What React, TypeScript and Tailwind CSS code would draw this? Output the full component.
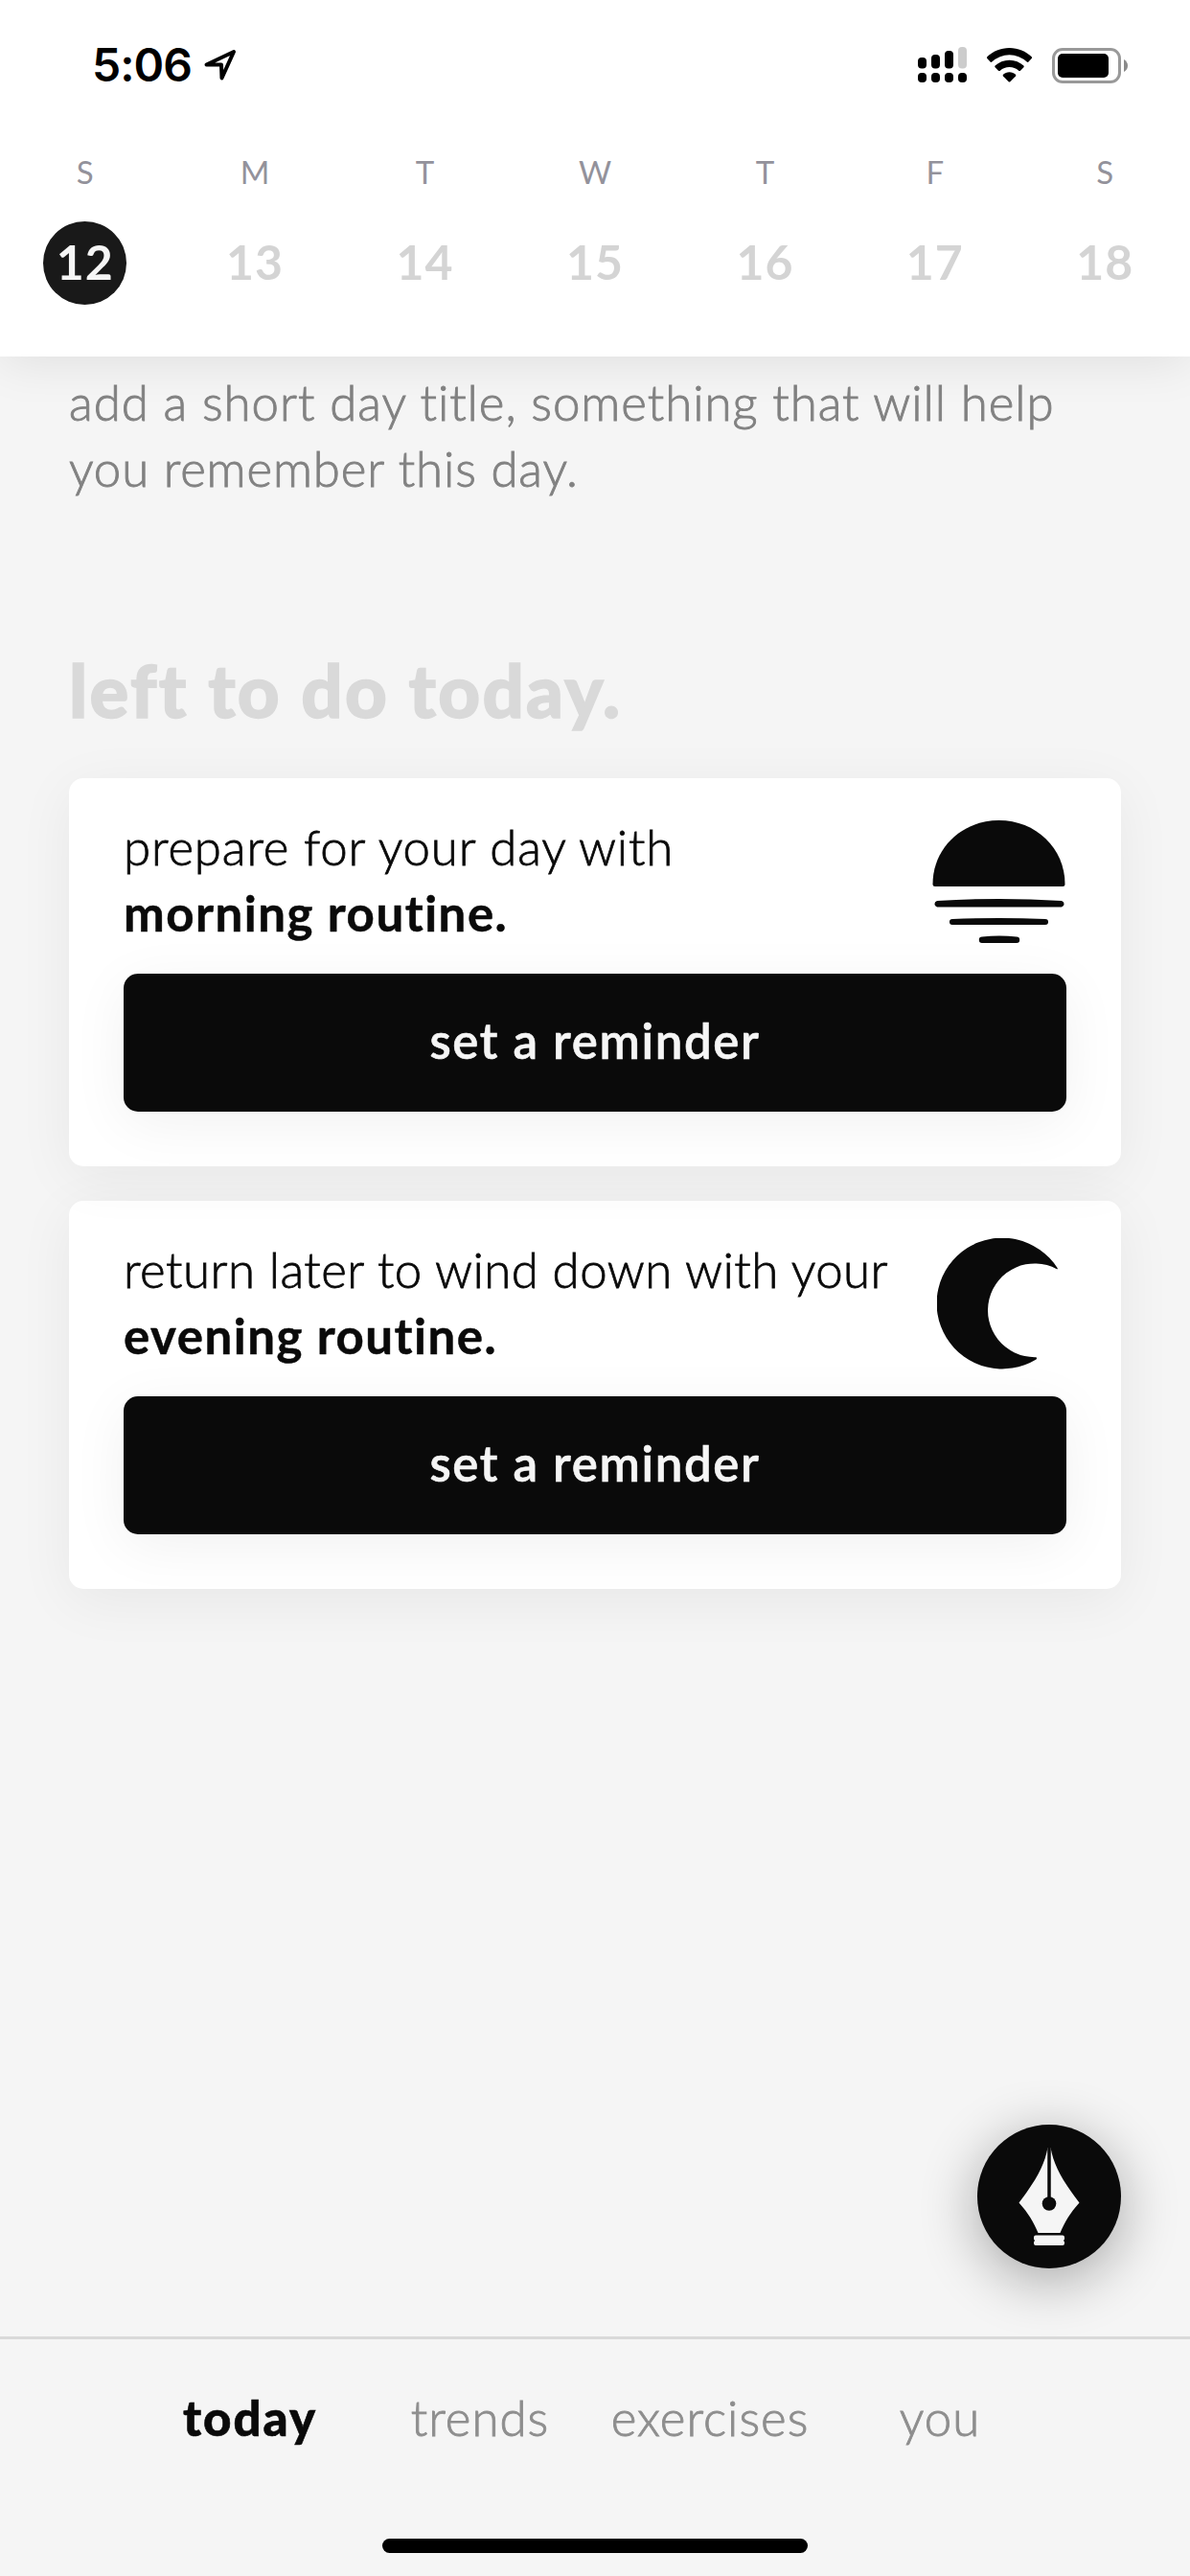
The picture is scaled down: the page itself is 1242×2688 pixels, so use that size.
import type { ReactNode } from "react";

const days = [
  { letter: "S", date: 12 },
  { letter: "M", date: 13 },
  { letter: "T", date: 14 },
  { letter: "W", date: 15 },
  { letter: "T", date: 16 },
  { letter: "F", date: 17 },
  { letter: "S", date: 18 },
];

function StatusBar() {
  return (
    <div className="flex h-[121px] items-center justify-between pt-[14px] pr-[65px] pl-[96px]">
      <div className="flex items-center">
        <span className="font-[Inter] text-[48px] leading-[60px] font-semibold tracking-[-1px] text-black">5:06</span>
        <svg className="ml-[13px] h-[34px] w-[34px]" viewBox="0 0 34 34" fill="none" stroke="#000" strokeWidth="4" strokeLinejoin="round">
          <path d="M2.5 16.500 31 3 18.500 30.500 18 16.500Z" />
        </svg>
      </div>
      <div className="flex items-start">
        <svg className="h-[38px] w-[52px]" viewBox="0 0 52 38">
          <rect x="0" y="11" width="9" height="11.5" rx="4" />
          <rect x="14" y="8" width="9" height="14.5" rx="4" />
          <rect x="28" y="4" width="9" height="18.5" rx="4" />
          <rect x="42" y="0" width="9" height="22.5" rx="4" fill="#cccccc" />
          <rect x="0" y="27" width="9" height="10" rx="4" />
          <rect x="14" y="27" width="9" height="10" rx="4" />
          <rect x="28" y="27" width="9" height="10" rx="4" />
          <rect x="42" y="27" width="9" height="10" rx="4" />
        </svg>
        <svg className="mt-px ml-[20px] h-[37px] w-[48px]" viewBox="0 0 48 37">
          <path d="M23.5 0C32.5 0 40.8 3.500 46.700 9.300Q47.500 10.200 46.700 11L43.500 14.500Q42.600 15.300 41.700 14.500A26.500 26.500 0 0 0 5.300 14.500Q4.400 15.300 3.500 14.500L.3 11Q-.5 10.200.3 9.300C6.200 3.500 14.500 0 23.500 0Z" />
          <path d="M23.500 12.800C29.300 12.800 34.500 15 38.400 18.600Q39.200 19.400 38.400 20.300L35 23.700Q34.100 24.500 33.200 23.700A14.500 14.500 0 0 0 13.800 23.700Q12.900 24.500 12 23.700L8.600 20.300Q7.800 19.400 8.600 18.600C12.500 15 17.700 12.800 23.500 12.800Z" />
          <path d="M23.500 25.300C26.100 25.300 28.300 26.200 30 27.700Q30.800 28.500 30 29.400L24.300 35.200Q23.500 36 22.700 35.200L17 29.400Q16.200 28.500 17 27.700C18.700 26.200 20.900 25.300 23.500 25.300Z" />
        </svg>
        <svg className="mt-px ml-[20px] h-[37px] w-[79px]" viewBox="0 0 79 37">
          <rect x="1.500" y="1.500" width="69" height="34" rx="9.500" fill="#fff" stroke="#999999" strokeWidth="3" />
          <rect x="6" y="6" width="53" height="25" rx="5" />
          <path d="M75 12Q79 14.500 79 18.500T75 25Z" fill="#8a8a8a" />
        </svg>
      </div>
    </div>
  );
}

function Header() {
  return (
    <header className="relative z-20 h-[372px] bg-white shadow-[0_6px_48px_rgba(0,0,0,0.09)]">
      <StatusBar />
      <div className="grid grid-cols-7 pt-[38px]">
        {days.map((day, index) => (
          <div key={day.date} className="flex flex-col items-center">
            <span className="text-[33px] leading-[40px] text-[#93929b]">{day.letter}</span>
            <span
              className={
                index === 0
                  ? "mt-[32px] flex size-[87px] items-center justify-center rounded-full bg-[#191919] pb-[2px] text-[50px] font-bold tracking-[1px] text-[#f5f5f5]"
                  : "mt-[32px] flex size-[87px] items-center justify-center pb-[2px] text-[50px] font-bold tracking-[1px] text-[#d4d4d4]"
              }
            >
              {day.date}
            </span>
          </div>
        ))}
      </div>
    </header>
  );
}

function SunIcon() {
  return (
    <svg className="mt-[6px] h-[130px] w-[140px]" viewBox="0 0 140 130" fill="#0a0a0a">
      <path d="M0.500 67.500C0.500 30 31 1 69.500 1S138.500 30 138.500 67.500Q138.500 70 136 70H3Q.5 70 .5 67.500Z" />
      <path d="M5 85Q70 81 135 85A3.400 3.400 0 0 1 135 91.600H5A3.400 3.400 0 0 1 5 85Z" />
      <path d="M21 104Q70 102 118 104A3 3 0 0 1 118 110.100H21A3 3 0 0 1 21 104Z" />
      <path d="M52 122.600Q70 120.500 88 122.600A3 3 0 0 1 88 129H52A3 3 0 0 1 52 122.600Z" />
    </svg>
  );
}

function MoonIcon() {
  return (
    <svg className="mt-[2px] mr-[7px] h-[138px] w-[128px]" viewBox="0 0 128 138" fill="#0a0a0a">
      <path d="M125.500 31A68.400 68.400 0 1 0 103.500 126.500Q105 124 102.500 124.200A48.900 48.900 0 1 1 125 32.200Q126.600 32.800 125.500 31Z" />
    </svg>
  );
}

function RoutineCard({ lead, name, icon, className }: { lead: ReactNode; name: ReactNode; icon: ReactNode; className: string }) {
  return (
    <section className={`relative h-[405px] rounded-[15px] bg-white px-[57px] pt-[37px] shadow-[0_12px_60px_rgba(0,0,0,0.057)] ${className}`}>
      <div className="flex h-[138px] items-start justify-between">
        <p className="text-[51px] leading-[69px] whitespace-nowrap text-[#0a0a0a]">
          {lead}
          <br />
          {name}
        </p>
        {icon}
      </div>
      <button className="mt-[29px] block h-[144px] w-full rounded-[15px] bg-[#0a0a0a] pb-[4px] text-center text-[51px] font-semibold tracking-[1.65px] text-[#f5f5f5] shadow-[0_12px_60px_rgba(0,0,0,0.057)] [-webkit-text-stroke:0.6px]">
        set a reminder
      </button>
    </section>
  );
}

function PenButton() {
  return (
    <button className="absolute top-[2217px] left-[1020px] z-10 size-[150px] rounded-full bg-[#0a0a0a] shadow-[0_12px_60px_rgba(0,0,0,0.33)]">
      <svg className="size-[150px]" viewBox="0 0 150 150">
        <path d="M73.500 24H76.500C80 42 87 56 106.500 81.500C97 92 91 102 86.500 113H63.500C59 102 53 92 43.500 81.500C63 56 70 42 73.500 24Z" fill="#f5f5f5" />
        <path d="M75 22V82" stroke="#0a0a0a" strokeWidth="3.500" />
        <circle cx="75" cy="82.500" r="7.300" fill="#0a0a0a" />
        <path d="M61 115.500H89Q91 115.500 91 117.500V119.500L90 121L91 122.500V124Q91 126 89 126H61Q59 126 59 124V122.500L60 121L59 119.500V117.500Q59 115.500 61 115.500Z" fill="#f5f5f5" />
      </svg>
    </button>
  );
}

function TabBar() {
  return (
    <nav className="relative z-20 h-[250px] border-t-[3px] border-[#d9d9d9] bg-[#f5f5f5]">
      <div className="flex justify-center pt-[47px] text-[51px] leading-[69px] text-[#8e8e8e]">
        <span className="w-[240px] text-center font-black tracking-[2px] text-[#0a0a0a] [-webkit-text-stroke:0.6px]">today</span>
        <span className="w-[240px] text-center font-light tracking-[1px] [-webkit-text-stroke:0.9px]">trends</span>
        <span className="w-[240px] text-center font-light tracking-[1px] [-webkit-text-stroke:0.9px]">exercises</span>
        <span className="w-[240px] text-center font-light tracking-[1px] [-webkit-text-stroke:0.9px]">you</span>
      </div>
      <div className="mx-auto mt-[92px] h-[15px] w-[444px] rounded-full bg-black" />
    </nav>
  );
}

export default function App() {
  return (
    <div className="relative flex h-[2688px] w-[1242px] flex-col overflow-hidden bg-[#f5f5f5] font-[Lato,sans-serif]">
      <Header />
      <main className="flex-1 px-[72px] pt-[13px]">
        <p className="text-[51px] leading-[69px] font-light whitespace-nowrap text-[#828282] [-webkit-text-stroke:0.9px]">
          <span className="tracking-[0.95px]">add a short day title, something that will help</span>
          <br />
          <span className="tracking-[0.85px]">you remember this day.</span>
        </p>
        <h2 className="mt-[152px] text-[76px] leading-[90px] font-black tracking-[2.3px] text-[#d9d9d9] [-webkit-text-stroke:1.5px_#d9d9d9]">left to do today.</h2>
        <div className="mt-[47px] flex flex-col gap-[36px]">
          <RoutineCard
            className="z-10"
            lead={<span className="font-light tracking-[0.85px] [-webkit-text-stroke:0.8px]">prepare for your day with</span>}
            name={<span className="font-bold tracking-[1.5px] [-webkit-text-stroke:0.5px]">morning routine.</span>}
            icon={<SunIcon />}
          />
          <RoutineCard
            className="z-0"
            lead={<span className="font-light tracking-[0.46px] [-webkit-text-stroke:0.8px]">return later to wind down with your</span>}
            name={<span className="font-bold tracking-[1.5px] [-webkit-text-stroke:0.5px]">evening routine.</span>}
            icon={<MoonIcon />}
          />
        </div>
      </main>
      <PenButton />
      <TabBar />
    </div>
  );
}
